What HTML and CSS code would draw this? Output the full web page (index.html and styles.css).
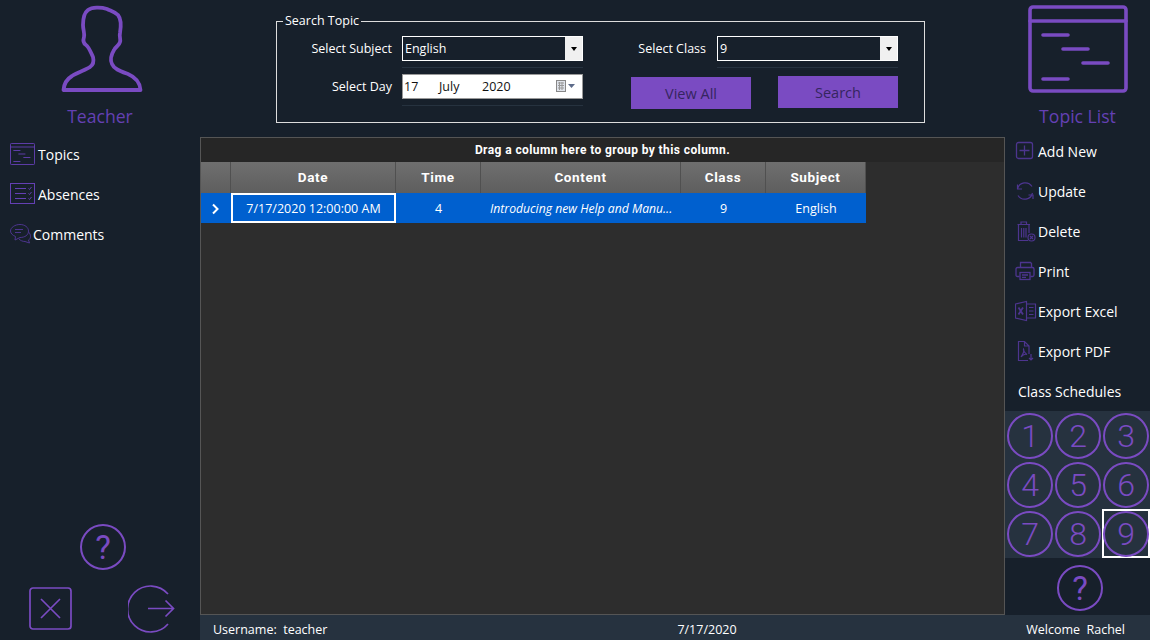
FILE: index.html
```html
<!DOCTYPE html>
<html>
<head>
  <title>Topic List</title>
  <link rel="stylesheet" href="styles.css">
</head>
<body>

  <svg class="defs" width="0" height="0">
    <symbol id="topic-icon" viewBox="0 0 100 88">
      <rect x="2" y="2" width="96" height="84" rx="3" fill="none" stroke="currentColor" stroke-width="3.6"/>
      <path d="M2 16H98M15 30H40M35 44H60M55 58H80M15 74H40" fill="none" stroke="currentColor" stroke-width="3.6" stroke-linecap="round"/>
    </symbol>
  </svg>

  <div class="app">
    <aside class="left">
      <div class="title-block">
        <svg class="person" width="84" height="88" viewBox="60 5 84 88">
          <path d="M63.5 90H140.5C140 82 135 77 128 74C120 71 114 69 112 64C110 60 111 55 114 50C116 46 119 46 120 42C121 39 119 37 120 33C121 27 122 20 118 15C115 12 111 11 107 9C101 7 92 7 88 10C84 13 83 18 83 25C83 30 85 34 84 37C83 40 83 43 86 45C89 47 91 53 93 57C94 61 93 65 90 67C86 70 78 72 72 76C67 79 64 84 63.5 90Z" fill="none" stroke="#7a4bc2" stroke-width="3.8" stroke-linejoin="round"/>
        </svg>
        <div class="title">Teacher</div>
      </div>

      <nav class="nav">
        <a class="nav-item">
          <svg class="icon wide" width="28" height="24" viewBox="0 0 28 24"><use href="#topic-icon" x="0" y="1" width="25" height="22"/></svg>
          Topics
        </a>
        <a class="nav-item">
          <svg class="icon wide" width="28" height="24" viewBox="0 0 28 24" fill="none" stroke="currentColor">
            <rect x="0.5" y="1.5" width="24" height="20"/>
            <path d="M5 6.5H16M5 11.5H16M5 16.5H16M18.5 6.5L19.5 7.5L21.5 5M18.5 11.5L19.5 12.5L21.5 10M18.5 16.5L19.5 17.5L21.5 15"/>
          </svg>
          Absences
        </a>
        <a class="nav-item">
          <svg class="icon" width="23" height="24" viewBox="0 0 23 24" fill="none" stroke="currentColor">
            <path d="M10 2.5C15 2.5 18.5 5.5 18.5 9C18.5 13 15 15.5 10 15.5L5 18L5.5 14.5C3 13.5 0.5 11.5 0.5 9C0.5 5.5 5 2.5 10 2.5Z"/>
            <path d="M5 7.5H13M5 10.5H11M18.5 10C20 11.5 20.5 13 20.5 14.5C20.5 16.5 19.5 17.5 18.5 18L19.5 21L15 19.5C12.5 19.5 10.5 18.5 9 17"/>
          </svg>
          Comments
        </a>
      </nav>

      <div class="left-bottom">
        <div class="help">?</div>
        <div class="left-actions">
          <svg width="44" height="44" viewBox="0 0 44 44" fill="none" stroke="#7a4bc2" stroke-width="1.7">
            <rect x="1" y="1" width="41" height="41" rx="3"/>
            <path d="M12 12L31 31M31 12L12 31"/>
          </svg>
          <svg width="48" height="48" viewBox="0 0 48 48" fill="none" stroke="#7a4bc2" stroke-width="1.7">
            <path d="M40 9A23 23 0 1 0 40 39"/>
            <path d="M20 23.5H45.500M37.500 15.500L45.500 23.500L37.500 31.500"/>
          </svg>
        </div>
      </div>
    </aside>

    <div class="body">
      <div class="columns">
        <main class="center">
          <fieldset class="search">
            <legend>Search Topic</legend>
            <div class="search-cols">
              <div class="search-left">
                <label class="field-label">Select Subject</label>
                <div class="control-wrap">
                  <div class="select"><span class="select-value">English</span><span class="select-btn"><i class="caret"></i></span></div>
                </div>
                <label class="field-label">Select Day</label>
                <div class="control-wrap">
                  <div class="date">
                    <span class="date-day">17</span><span class="date-month">July</span><span class="date-year">2020</span>
                    <svg class="date-icon" width="20" height="14" viewBox="0 0 20 14">
                      <rect x="0.5" y="0.5" width="9" height="11" fill="#dfe3ea" stroke="#888"/>
                      <path d="M2 3H8M2 5.5H8M2 8H8M3.5 2V10M6 2V10" stroke="#999" fill="none"/>
                      <path d="M12 4H19L15.5 8Z" fill="#5d6b8a"/>
                    </svg>
                  </div>
                </div>
              </div>
              <div class="search-right">
                <div class="class-row">
                  <label class="field-label">Select Class</label>
                  <div class="control-wrap">
                    <div class="select"><span class="select-value">9</span><span class="select-btn"><i class="caret"></i></span></div>
                  </div>
                </div>
                <div class="buttons">
                  <button class="btn btn-low">View All</button>
                  <button class="btn">Search</button>
                </div>
              </div>
            </div>
          </fieldset>

          <section class="grid-panel">
            <div class="group-bar">Drag a column here to group by this column.</div>
            <table class="data">
              <colgroup>
                <col class="c-ind"><col class="c-date"><col class="c-time"><col class="c-content"><col class="c-class"><col class="c-subject">
              </colgroup>
              <thead>
                <tr><th></th><th>Date</th><th>Time</th><th>Content</th><th>Class</th><th>Subject</th></tr>
              </thead>
              <tbody>
                <tr>
                  <td><svg width="10" height="12" viewBox="0 0 10 12"><path d="M2 1.5L6.5 6L2 10.5" fill="none" stroke="#fff" stroke-width="2"/></svg></td>
                  <td class="focused">7/17/2020 12:00:00 AM</td>
                  <td>4</td>
                  <td class="content">Introducing new Help and Manu...</td>
                  <td>9</td>
                  <td>English</td>
                </tr>
              </tbody>
            </table>
          </section>
        </main>

        <aside class="right">
          <div class="title-block">
            <svg class="big-icon" width="100" height="88"><use href="#topic-icon"/></svg>
            <div class="title">Topic List</div>
          </div>

          <nav class="actions">
            <a class="action">
              <svg class="icon" width="23" height="24" viewBox="0 0 23 24" fill="none" stroke="currentColor" stroke-width="1.3">
                <rect x="1.5" y="3.5" width="16" height="16" rx="2"/><path d="M9.5 6.5V16.5M4.5 11.5H14.5"/>
              </svg>
              Add New
            </a>
            <a class="action">
              <svg class="icon" width="23" height="24" viewBox="0 0 23 24" fill="none" stroke="currentColor" stroke-width="1.2">
                <path d="M2.500 10A8 8 0 0 1 17 7.500"/>
                <path d="M2.500 5.500V10H7"/>
                <path d="M17.500 14A8 8 0 0 1 3 16.500"/>
                <path d="M13.500 16L18 16V20"/>
              </svg>
              Update
            </a>
            <a class="action">
              <svg class="icon" width="23" height="24" viewBox="0 0 23 24" fill="none" stroke="currentColor" stroke-width="1.2">
                <path d="M2.5 5.5H15M6 5.5V3H11.5V5.5M3.5 5.5V21.5H13M14 5.5V14"/>
                <path d="M6.5 9V18.5M8.8 9V18.5M11 9V18.5"/>
                <circle cx="16.5" cy="18.5" r="3.5"/><path d="M15 17L18 20M18 17L15 20"/>
              </svg>
              Delete
            </a>
            <a class="action">
              <svg class="icon" width="23" height="24" viewBox="0 0 23 24" fill="none" stroke="currentColor" stroke-width="1.3">
                <path d="M5.5 8V3.5H15.5L16.5 4.5V8M4.5 17.5H2.5C1.5 17.5 1 17 1 16V10C1 9 1.5 8.5 2.5 8.5H17.5C18.5 8.5 19 9 19 10V16C19 17 18.5 17.5 17.5 17.5H15.5"/>
                <rect x="5" y="13.5" width="10" height="7"/><path d="M7 16H13M7 18.3H11"/>
              </svg>
              Print
            </a>
            <a class="action">
              <svg class="icon" width="23" height="24" viewBox="0 0 23 24" fill="none" stroke="currentColor" stroke-width="1.2">
                <path d="M0.5 5L11.5 2.5V21.5L0.5 19Z"/>
                <path d="M11.5 5H20.5V19H11.5M14 8.5H18.5M14 12H18.5M14 15.5H18.5"/>
                <path d="M3.5 8.5L8 15.5M8 8.5L3.5 15.5" stroke-width="1.8"/>
              </svg>
              Export Excel
            </a>
            <a class="action">
              <svg class="icon" width="23" height="24" viewBox="0 0 23 24" fill="none" stroke="currentColor" stroke-width="1.2">
                <path d="M14 15V7L9.5 2.5H3.5V21.5H13M9.5 2.5V7H14"/>
                <path d="M6 18C8 15 9.5 11.5 8.5 10C8 11 9.5 14 12 15.5C10.5 15 8 15.5 6 18Z"/>
                <path d="M16 15V21M14 19L16 21L18 19"/>
              </svg>
              Export PDF
            </a>
            <div class="action schedules">Class Schedules</div>
          </nav>

          <div class="numbers">
            <button class="num"><span class="circle">1</span></button>
            <button class="num"><span class="circle">2</span></button>
            <button class="num"><span class="circle">3</span></button>
            <button class="num"><span class="circle">4</span></button>
            <button class="num"><span class="circle">5</span></button>
            <button class="num"><span class="circle">6</span></button>
            <button class="num"><span class="circle">7</span></button>
            <button class="num"><span class="circle">8</span></button>
            <button class="num selected"><span class="circle">9</span></button>
          </div>

          <div class="right-help">
            <div class="help">?</div>
          </div>
        </aside>
      </div>

      <footer class="status">
        <span class="status-user">Username:&nbsp; teacher</span>
        <span class="status-date">7/17/2020</span>
        <span class="status-welcome">Welcome&nbsp; Rachel</span>
      </footer>
    </div>
  </div>

</body>
</html>
```

FILE: styles.css
```css
* {
  box-sizing: border-box;
}

html,
body {
  height: 100%;
}

body {
  margin: 0;
  background-color: #17202b;
  color: #fff;
  font-family: "Open Sans", "Noto Sans", sans-serif;
  font-size: 12.5px;
  overflow: hidden;
}

.defs {
  display: block;
}

.app {
  display: grid;
  grid-template-columns: 200px 950px;
  height: 640px;
}

/* side columns */
.left {
  display: flex;
  flex-direction: column;
}

.title-block {
  display: flex;
  flex-direction: column;
  align-items: center;
}

.person {
  margin-top: 5px;
  margin-left: 4px;
}

.title {
  color: #6440b4;
  font-size: 17.6px;
  line-height: 26px;
  height: 26px;
  margin-top: 10px;
}

.nav {
  margin-top: 5px;
}

.nav-item {
  display: flex;
  align-items: center;
  height: 40px;
  padding-left: 10px;
  font-size: 14px;
}

.icon {
  flex: none;
  color: #4d358f;
}

.nav-item .icon.wide {
  color: #6440b4;
}

.left-bottom {
  margin-top: auto;
  padding-bottom: 7px;
}

.left-bottom .help {
  margin-left: 80px;
}

.left-actions {
  display: flex;
  justify-content: space-between;
  align-items: center;
  margin-top: 15px;
  padding: 0 24px 0 29px;
}

.help {
  display: flex;
  justify-content: center;
  align-items: center;
  width: 46px;
  height: 46px;
  border: 2px solid #7a4bc2;
  border-radius: 50%;
  color: #7a4bc2;
  font-family: Roboto, sans-serif;
  font-size: 33px;
}

/* center */
.body {
  display: flex;
  flex-direction: column;
  min-width: 0;
}

.columns {
  display: grid;
  grid-template-columns: 805px 145px;
  height: 615px;
}

.center {
  display: flex;
  flex-direction: column;
  min-height: 0;
}

.search {
  width: 649px;
  height: 112px;
  margin: 11px 0 14px 76px;
  padding: 5px 0 0;
  border: 1px solid #ddd;
}

.search legend {
  margin-left: 6px;
  padding: 0 2px;
  line-height: 20px;
  font-size: 12.5px;
}

.search-cols {
  display: flex;
}

.search-left {
  display: grid;
  grid-template-columns: 115px 181px;
  column-gap: 10px;
  row-gap: 6px;
  align-content: start;
  align-items: start;
}

.search-right {
  margin-left: 48px;
}

.field-label {
  display: block;
  height: 25px;
  line-height: 26px;
  text-align: right;
}

.control-wrap {
  width: 181px;
  padding-bottom: 6px;
  border-bottom: 1px solid #26323f;
}

.select {
  display: flex;
  height: 25px;
  border: 1px solid #fff;
}

.select-value {
  flex: 1;
  padding-left: 2px;
  line-height: 23px;
}

.select-btn {
  display: flex;
  justify-content: center;
  align-items: center;
  width: 17px;
  background-color: #f0f0f0;
}

.caret {
  border-top: 4px solid #000;
  border-left: 3px solid transparent;
  border-right: 3px solid transparent;
}

.date {
  display: flex;
  align-items: center;
  height: 25px;
  padding-left: 1px;
  background-color: #fff;
  border: 1px solid #999;
  color: #111;
}

.date-day {
  width: 35px;
}

.date-month {
  width: 43px;
}

.date-year {
  width: 74px;
}

.date-icon {
  flex: none;
}

.class-row {
  display: grid;
  grid-template-columns: 75px 181px;
  column-gap: 11px;
  align-items: start;
}

.buttons {
  display: flex;
  align-items: flex-start;
  gap: 27px;
  margin-top: 8px;
}

.btn {
  width: 120px;
  height: 32px;
  padding: 0;
  background-color: #7a4bc2;
  border: none;
  color: #35255f;
  font-family: "Open Sans", "Noto Sans", sans-serif;
  font-size: 14.5px;
}

.btn-low {
  margin-top: 1px;
}

/* data grid */
.grid-panel {
  flex: 1;
  min-height: 0;
  background-color: #2d2d2d;
  border: 1px solid #555;
}

.group-bar {
  height: 24px;
  background-color: #262626;
  line-height: 24px;
  text-align: center;
  font-family: Roboto, sans-serif;
  font-size: 12px;
  font-weight: 700;
  letter-spacing: 0.4px;
}

.data {
  table-layout: fixed;
  width: 665px;
  border-collapse: separate;
  border-spacing: 0;
}

.c-ind { width: 30px; }
.c-date { width: 165px; }
.c-time { width: 85px; }
.c-content { width: 200px; }
.c-class { width: 85px; }
.c-subject { width: 100px; }

.data th {
  height: 31px;
  padding: 0 0 2px;
  background: linear-gradient(#6f6f6f, #5e5e5e);
  border-right: 1px solid #505050;
  font-family: Roboto, sans-serif;
  font-size: 13.5px;
  font-weight: 700;
  letter-spacing: 0.6px;
}

.data td {
  height: 30px;
  padding: 0;
  background-color: #0060cf;
  border-top: 1px solid #0060cf;
  text-align: center;
}

.data td svg {
  display: block;
  margin: 0 auto;
}

.data td.focused {
  border: 2px solid #fff;
}

.data td.content {
  padding: 0 8px 0 9px;
  text-align: left;
  font-style: italic;
  font-size: 12.2px;
  white-space: nowrap;
}

/* right column */
.right {
  display: flex;
  flex-direction: column;
}

.big-icon {
  margin-top: 5px;
  color: #7a4bc2;
}

.actions {
  margin-top: 2px;
}

.action {
  display: flex;
  align-items: center;
  height: 40px;
  padding-left: 10px;
  font-size: 14px;
}

.schedules {
  padding-left: 13px;
}

.numbers {
  display: grid;
  grid-template-columns: repeat(3, 48px);
  grid-auto-rows: 49px;
  height: 147px;
  padding-left: 1px;
  background-color: #26323f;
}

.num {
  width: 48px;
  height: 49px;
  padding: 2px 1px 1px;
  background: none;
  border: none;
}

.num.selected {
  box-shadow: inset 0 0 0 2px #fff;
}

.circle {
  display: flex;
  justify-content: center;
  align-items: center;
  width: 46px;
  height: 46px;
  border: 2px solid #7a4bc2;
  border-radius: 50%;
  color: #7a4bc2;
  font-family: Roboto, sans-serif;
  font-size: 32px;
  font-weight: 300;
}

.right-help {
  display: flex;
  justify-content: center;
  padding-top: 7px;
  padding-left: 5px;
}

/* status bar */
.status {
  display: grid;
  grid-template-columns: 400px 188px 1fr;
  align-items: center;
  height: 25px;
  padding: 4px 25px 0 13px;
  background-color: #26323f;
}

.status-date {
  text-align: center;
}

.status-welcome {
  text-align: right;
}
```
